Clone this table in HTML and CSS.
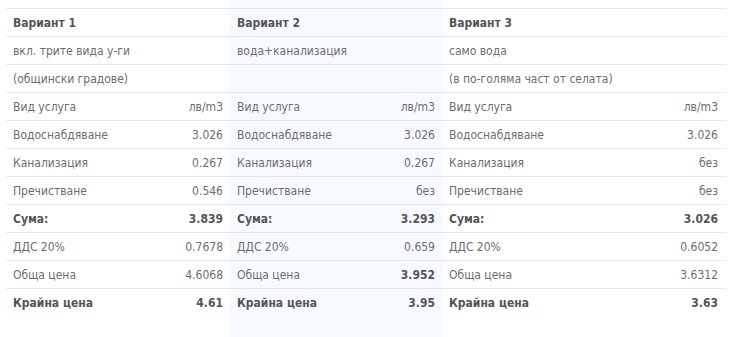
FILE: index.html
```html
<!DOCTYPE html>
<html lang="bg">
<head>
<meta charset="utf-8">
<link rel="stylesheet" href="styles.css">
</head>
<body>
<div class="plans">
  <div class="col col-1">
    <div class="row head"><span>Вариант 1</span></div>
    <div class="row"><span>вкл. трите вида у-ги</span></div>
    <div class="row"><span>(общински градове)</span></div>
    <div class="row"><span>Вид услуга</span><span>лв/m3</span></div>
    <div class="row"><span>Водоснабдяване</span><span>3.026</span></div>
    <div class="row"><span>Канализация</span><span>0.267</span></div>
    <div class="row"><span>Пречистване</span><span>0.546</span></div>
    <div class="row b"><span>Сума:</span><span>3.839</span></div>
    <div class="row"><span>ДДС 20%</span><span>0.7678</span></div>
    <div class="row"><span>Обща цена</span><span>4.6068</span></div>
    <div class="row b"><span>Крайна цена</span><span>4.61</span></div>
  </div>
  <div class="col col-2">
    <div class="row head"><span>Вариант 2</span></div>
    <div class="row"><span>вода+канализация</span></div>
    <div class="row"><span></span></div>
    <div class="row"><span>Вид услуга</span><span>лв/m3</span></div>
    <div class="row"><span>Водоснабдяване</span><span>3.026</span></div>
    <div class="row"><span>Канализация</span><span>0.267</span></div>
    <div class="row"><span>Пречистване</span><span>без</span></div>
    <div class="row b"><span>Сума:</span><span>3.293</span></div>
    <div class="row"><span>ДДС 20%</span><span>0.659</span></div>
    <div class="row"><span>Обща цена</span><span class="strong">3.952</span></div>
    <div class="row b"><span>Крайна цена</span><span>3.95</span></div>
  </div>
  <div class="col col-3">
    <div class="row head"><span>Вариант 3</span></div>
    <div class="row"><span>само вода</span></div>
    <div class="row"><span>(в по-голяма част от селата)</span></div>
    <div class="row"><span>Вид услуга</span><span>лв/m3</span></div>
    <div class="row"><span>Водоснабдяване</span><span>3.026</span></div>
    <div class="row"><span>Канализация</span><span>без</span></div>
    <div class="row"><span>Пречистване</span><span>без</span></div>
    <div class="row b"><span>Сума:</span><span>3.026</span></div>
    <div class="row"><span>ДДС 20%</span><span>0.6052</span></div>
    <div class="row"><span>Обща цена</span><span>3.6312</span></div>
    <div class="row b"><span>Крайна цена</span><span>3.63</span></div>
  </div>
</div>
</body>
</html>
```
FILE: styles.css
```css
html, body {
  margin: 0;
  padding: 0;
  background: #ffffff;
}
body {
  font-family: "DejaVu Sans Condensed", "DejaVu Sans", sans-serif;
  font-size: 12px;
  color: #6d6d6d;
  width: 731px;
  height: 337px;
  overflow: hidden;
}
.plans {
  display: flex;
  height: 337px;
  padding-left: 6px;
}
.col {
  padding-top: 8px;
  box-sizing: border-box;
}
.col-1 { width: 223px; }
.col-2 { width: 214px; background: #f6faff; }
.col-3 { width: 283px; }
.row {
  display: flex;
  justify-content: space-between;
  border-top: 1px solid #e8e8e8;
  height: 25px;
  padding-top: 2px;
  line-height: 25px;
  white-space: nowrap;
}
.col-1 .row { padding-left: 7px; padding-right: 6px; }
.col-2 .row { padding-left: 8px; padding-right: 8px; }
.col-3 .row { padding-left: 6px; padding-right: 8px; }
.row.head, .row.b, .strong {
  font-weight: bold;
  color: #555555;
}
```
